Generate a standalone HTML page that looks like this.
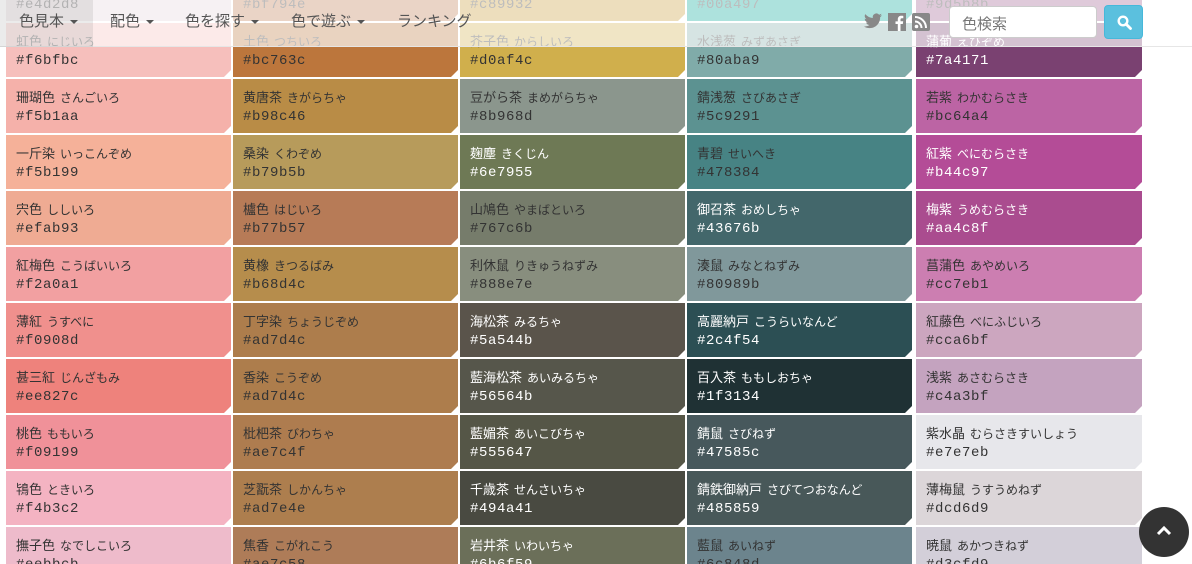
<!DOCTYPE html>
<html style="height:564px;overflow:hidden"><head><meta charset="utf-8"><style>
*{margin:0;padding:0;box-sizing:border-box}
body{width:1192px;height:564px;overflow:hidden;background:#fff;position:relative;font-family:"Liberation Sans","Noto Sans CJK JP",sans-serif}
.wrap{position:absolute;left:0;top:0;width:1192px;height:564px;overflow:hidden}
.col{position:absolute;top:-33px;width:225px}
.t{height:54px;margin-bottom:2px;position:relative;padding:8px 0 0 10px;color:#333;overflow:hidden}
.t.w{color:#fff}
.t:after{content:"";position:absolute;right:0;bottom:0;border-style:solid;border-width:0 0 7px 7px;border-color:transparent transparent #fff transparent}
.n{font-size:13px;height:21px;line-height:21px;white-space:nowrap}
.n small{font-size:12px;margin-left:5px}
.h{font-family:"Liberation Mono",monospace;font-size:14px;line-height:18px;letter-spacing:.6px}
.nav{position:absolute;left:0;top:0;width:1192px;height:47px;background:rgba(255,255,255,.68);border-bottom:1px solid #e6e6e6}
.nav .it{position:absolute;top:10px;font-size:15px;color:#555}
.car{display:inline-block;border-top:4px solid #555;border-left:4px solid transparent;border-right:4px solid transparent;vertical-align:middle;margin-left:6px}
.act{position:absolute;left:0;top:0;width:93px;height:47px;background:rgba(120,120,120,.15)}
.srch{position:absolute;left:949px;top:6px;width:148px;height:32px;background:#fff;border:1px solid #ccc;border-radius:4px;font-size:15px;color:#777;padding:6px 0 0 12px}
.btn{position:absolute;left:1104px;top:5px;width:39px;height:34px;background:#5bc0de;border:1px solid #46b8da;border-radius:4px}
.top{position:absolute;left:1139px;top:507px;width:50px;height:50px;border-radius:50%;background:#333}
</style></head><body><div class="wrap">
<div class="col" style="left:6px">
<div class="t" style="background:#e4d2d8"><div class="n">&nbsp;</div><div class="h">#e4d2d8</div></div>
<div class="t" style="background:#f6bfbc"><div class="n">虹色<small>にじいろ</small></div><div class="h">#f6bfbc</div></div>
<div class="t" style="background:#f5b1aa"><div class="n">珊瑚色<small>さんごいろ</small></div><div class="h">#f5b1aa</div></div>
<div class="t" style="background:#f5b199"><div class="n">一斤染<small>いっこんぞめ</small></div><div class="h">#f5b199</div></div>
<div class="t" style="background:#efab93"><div class="n">宍色<small>ししいろ</small></div><div class="h">#efab93</div></div>
<div class="t" style="background:#f2a0a1"><div class="n">紅梅色<small>こうばいいろ</small></div><div class="h">#f2a0a1</div></div>
<div class="t" style="background:#f0908d"><div class="n">薄紅<small>うすべに</small></div><div class="h">#f0908d</div></div>
<div class="t" style="background:#ee827c"><div class="n">甚三紅<small>じんざもみ</small></div><div class="h">#ee827c</div></div>
<div class="t" style="background:#f09199"><div class="n">桃色<small>ももいろ</small></div><div class="h">#f09199</div></div>
<div class="t" style="background:#f4b3c2"><div class="n">鴇色<small>ときいろ</small></div><div class="h">#f4b3c2</div></div>
<div class="t" style="background:#eebbcb"><div class="n">撫子色<small>なでしこいろ</small></div><div class="h">#eebbcb</div></div>
</div>
<div class="col" style="left:233px">
<div class="t" style="background:#bf794e"><div class="n">&nbsp;</div><div class="h">#bf794e</div></div>
<div class="t" style="background:#bc763c"><div class="n">土色<small>つちいろ</small></div><div class="h">#bc763c</div></div>
<div class="t" style="background:#b98c46"><div class="n">黄唐茶<small>きがらちゃ</small></div><div class="h">#b98c46</div></div>
<div class="t" style="background:#b79b5b"><div class="n">桑染<small>くわぞめ</small></div><div class="h">#b79b5b</div></div>
<div class="t" style="background:#b77b57"><div class="n">櫨色<small>はじいろ</small></div><div class="h">#b77b57</div></div>
<div class="t" style="background:#b68d4c"><div class="n">黄橡<small>きつるばみ</small></div><div class="h">#b68d4c</div></div>
<div class="t" style="background:#ad7d4c"><div class="n">丁字染<small>ちょうじぞめ</small></div><div class="h">#ad7d4c</div></div>
<div class="t" style="background:#ad7d4c"><div class="n">香染<small>こうぞめ</small></div><div class="h">#ad7d4c</div></div>
<div class="t" style="background:#ae7c4f"><div class="n">枇杷茶<small>びわちゃ</small></div><div class="h">#ae7c4f</div></div>
<div class="t" style="background:#ad7e4e"><div class="n">芝翫茶<small>しかんちゃ</small></div><div class="h">#ad7e4e</div></div>
<div class="t" style="background:#ae7c58"><div class="n">焦香<small>こがれこう</small></div><div class="h">#ae7c58</div></div>
</div>
<div class="col" style="left:460px">
<div class="t" style="background:#c89932"><div class="n">&nbsp;</div><div class="h">#c89932</div></div>
<div class="t" style="background:#d0af4c"><div class="n">芥子色<small>からしいろ</small></div><div class="h">#d0af4c</div></div>
<div class="t" style="background:#8b968d"><div class="n">豆がら茶<small>まめがらちゃ</small></div><div class="h">#8b968d</div></div>
<div class="t w" style="background:#6e7955"><div class="n">麹塵<small>きくじん</small></div><div class="h">#6e7955</div></div>
<div class="t" style="background:#767c6b"><div class="n">山鳩色<small>やまばといろ</small></div><div class="h">#767c6b</div></div>
<div class="t" style="background:#888e7e"><div class="n">利休鼠<small>りきゅうねずみ</small></div><div class="h">#888e7e</div></div>
<div class="t w" style="background:#5a544b"><div class="n">海松茶<small>みるちゃ</small></div><div class="h">#5a544b</div></div>
<div class="t w" style="background:#56564b"><div class="n">藍海松茶<small>あいみるちゃ</small></div><div class="h">#56564b</div></div>
<div class="t w" style="background:#555647"><div class="n">藍媚茶<small>あいこびちゃ</small></div><div class="h">#555647</div></div>
<div class="t w" style="background:#494a41"><div class="n">千歳茶<small>せんさいちゃ</small></div><div class="h">#494a41</div></div>
<div class="t w" style="background:#6b6f59"><div class="n">岩井茶<small>いわいちゃ</small></div><div class="h">#6b6f59</div></div>
</div>
<div class="col" style="left:687px">
<div class="t" style="background:#00a497"><div class="n">&nbsp;</div><div class="h">#00a497</div></div>
<div class="t" style="background:#80aba9"><div class="n">水浅葱<small>みずあさぎ</small></div><div class="h">#80aba9</div></div>
<div class="t" style="background:#5c9291"><div class="n">錆浅葱<small>さびあさぎ</small></div><div class="h">#5c9291</div></div>
<div class="t" style="background:#478384"><div class="n">青碧<small>せいへき</small></div><div class="h">#478384</div></div>
<div class="t w" style="background:#43676b"><div class="n">御召茶<small>おめしちゃ</small></div><div class="h">#43676b</div></div>
<div class="t" style="background:#80989b"><div class="n">湊鼠<small>みなとねずみ</small></div><div class="h">#80989b</div></div>
<div class="t w" style="background:#2c4f54"><div class="n">高麗納戸<small>こうらいなんど</small></div><div class="h">#2c4f54</div></div>
<div class="t w" style="background:#1f3134"><div class="n">百入茶<small>ももしおちゃ</small></div><div class="h">#1f3134</div></div>
<div class="t w" style="background:#47585c"><div class="n">錆鼠<small>さびねず</small></div><div class="h">#47585c</div></div>
<div class="t w" style="background:#485859"><div class="n">錆鉄御納戸<small>さびてつおなんど</small></div><div class="h">#485859</div></div>
<div class="t" style="background:#6c848d"><div class="n">藍鼠<small>あいねず</small></div><div class="h">#6c848d</div></div>
</div>
<div class="col" style="left:916px;width:226px">
<div class="t" style="background:#9d5b8b"><div class="n">&nbsp;</div><div class="h">#9d5b8b</div></div>
<div class="t w" style="background:#7a4171"><div class="n">蒲葡<small>えびぞめ</small></div><div class="h">#7a4171</div></div>
<div class="t" style="background:#bc64a4"><div class="n">若紫<small>わかむらさき</small></div><div class="h">#bc64a4</div></div>
<div class="t w" style="background:#b44c97"><div class="n">紅紫<small>べにむらさき</small></div><div class="h">#b44c97</div></div>
<div class="t w" style="background:#aa4c8f"><div class="n">梅紫<small>うめむらさき</small></div><div class="h">#aa4c8f</div></div>
<div class="t" style="background:#cc7eb1"><div class="n">菖蒲色<small>あやめいろ</small></div><div class="h">#cc7eb1</div></div>
<div class="t" style="background:#cca6bf"><div class="n">紅藤色<small>べにふじいろ</small></div><div class="h">#cca6bf</div></div>
<div class="t" style="background:#c4a3bf"><div class="n">浅紫<small>あさむらさき</small></div><div class="h">#c4a3bf</div></div>
<div class="t" style="background:#e7e7eb"><div class="n">紫水晶<small>むらさきすいしょう</small></div><div class="h">#e7e7eb</div></div>
<div class="t" style="background:#dcd6d9"><div class="n">薄梅鼠<small>うすうめねず</small></div><div class="h">#dcd6d9</div></div>
<div class="t" style="background:#d3cfd9"><div class="n">暁鼠<small>あかつきねず</small></div><div class="h">#d3cfd9</div></div>
</div>
<div class="nav">
<div class="act"></div>
<div class="it" style="left:19px">色見本<span class="car"></span></div>
<div class="it" style="left:110px">配色<span class="car"></span></div>
<div class="it" style="left:185px">色を探す<span class="car"></span></div>
<div class="it" style="left:291px">色で遊ぶ<span class="car"></span></div>
<div class="it" style="left:397px">ランキング</div>
<svg style="position:absolute;left:864px;top:13px" width="18" height="16" viewBox="0 0 24 20"><path fill="#888" d="M24 2.4a10 10 0 0 1-2.8.8A5 5 0 0 0 23.3.4a10 10 0 0 1-3.1 1.2A4.9 4.9 0 0 0 11.8 6 14 14 0 0 1 1.7.9a4.9 4.9 0 0 0 1.5 6.6A4.9 4.9 0 0 1 1 6.9a4.9 4.9 0 0 0 3.9 4.9 5 5 0 0 1-2.2.1 4.9 4.9 0 0 0 4.6 3.4A9.9 9.9 0 0 1 0 17.3 14 14 0 0 0 7.5 19.5c9.1 0 14-7.5 14-14v-.6A10 10 0 0 0 24 2.4z"/></svg>
<svg style="position:absolute;left:888px;top:13px" width="18" height="18" viewBox="0 0 18 18"><rect width="18" height="18" fill="#888"/><path fill="#fff" d="M12.5 18v-7h2.3l.4-2.7h-2.7V6.6c0-.8.3-1.3 1.4-1.3h1.4V2.9c-.3 0-1.1-.1-2.1-.1-2 0-3.4 1.3-3.4 3.6v2H7.5V11h2.3v7z"/></svg>
<svg style="position:absolute;left:912px;top:13px" width="18" height="18" viewBox="0 0 18 18"><rect width="18" height="18" rx="2" fill="#888"/><circle cx="4.5" cy="13.5" r="1.8" fill="#fff"/><path d="M3 8.5a6.5 6.5 0 0 1 6.5 6.5M3 4a11 11 0 0 1 11 11" stroke="#fff" stroke-width="2" fill="none"/></svg>
<div class="srch">色検索</div>
<div class="btn"><svg style="position:absolute;left:12px;top:9px" width="15" height="15" viewBox="0 0 15 15"><circle cx="6" cy="6" r="4.3" stroke="#fff" stroke-width="2.4" fill="none"/><path d="M9 9l4.5 4.5" stroke="#fff" stroke-width="2.8" stroke-linecap="round"/></svg></div>
</div>
<div class="top"><svg style="position:absolute;left:17px;top:18px" width="16" height="12" viewBox="0 0 16 12"><path d="M2 9l6-6 6 6" stroke="#fff" stroke-width="3" fill="none"/></svg></div>
</div></body></html>
